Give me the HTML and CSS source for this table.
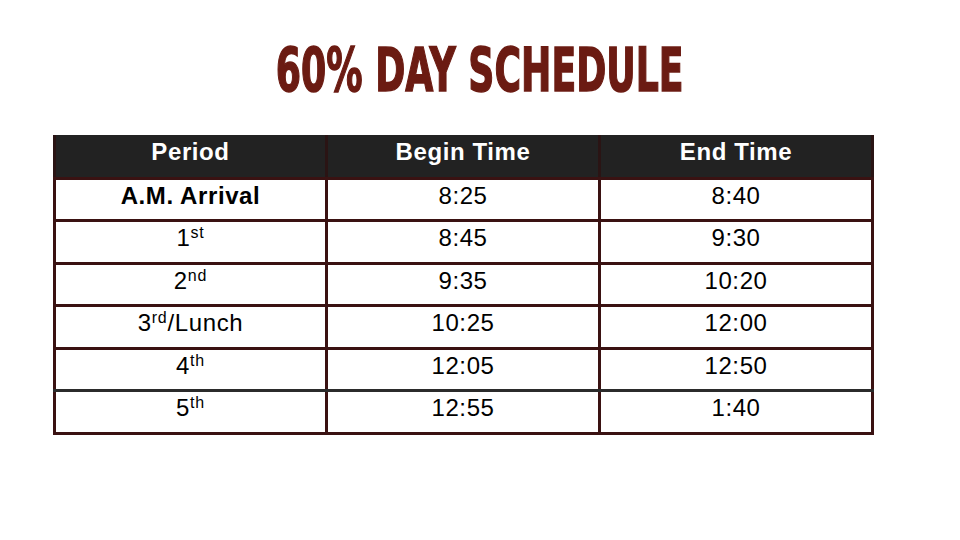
FILE: index.html
```html
<!DOCTYPE html>
<html>
<head>
<meta charset="utf-8">
<link rel="stylesheet" href="styles.css">
</head>
<body>
<div class="slide">
  <h1 class="title"><span class="title-text">60% DAY SCHEDULE</span></h1>
  <table class="schedule">
    <colgroup>
      <col class="c1"><col class="c2"><col class="c3">
    </colgroup>
    <thead>
      <tr class="head">
        <th>Period</th>
        <th>Begin Time</th>
        <th>End Time</th>
      </tr>
    </thead>
    <tbody>
      <tr>
        <td class="bold">A.M. Arrival</td>
        <td>8:25</td>
        <td>8:40</td>
      </tr>
      <tr>
        <td>1<sup>st</sup></td>
        <td>8:45</td>
        <td>9:30</td>
      </tr>
      <tr>
        <td>2<sup>nd</sup></td>
        <td>9:35</td>
        <td>10:20</td>
      </tr>
      <tr>
        <td>3<sup>rd</sup>/Lunch</td>
        <td>10:25</td>
        <td>12:00</td>
      </tr>
      <tr class="gray-bottom">
        <td>4<sup>th</sup></td>
        <td>12:05</td>
        <td>12:50</td>
      </tr>
      <tr>
        <td>5<sup>th</sup></td>
        <td>12:55</td>
        <td>1:40</td>
      </tr>
    </tbody>
  </table>
</div>
</body>
</html>
```

FILE: styles.css
```css
html, body {
  margin: 0;
  padding: 0;
  background: #ffffff;
}

.slide {
  width: 960px;
  height: 540px;
  overflow: hidden;
  background: #ffffff;
}

.title {
  margin: 0;
  padding-top: 41px;
  height: 62px;
  display: flex;
  justify-content: center;
  font-family: "DejaVu Sans", sans-serif;
  font-stretch: condensed;
  font-weight: bold;
  font-size: 62px;
  line-height: 60px;
  color: #6b1b12;
  white-space: nowrap;
}

.title-text {
  display: inline-block;
  transform: scaleX(0.65) scaleY(0.97);
  -webkit-text-stroke: 1.5px #6b1b12;
}

.schedule {
  margin-top: 32px;
  margin-left: 53px;
  width: 818px;
  border-collapse: collapse;
  table-layout: fixed;
  font-family: "Liberation Sans", Arial, sans-serif;
  font-size: 24px;
  letter-spacing: 0.6px;
  color: #000000;
}

.c1 { width: 272px; }
.c2 { width: 273px; }
.c3 { width: 273px; }

.schedule th,
.schedule td {
  border: 3px solid #3a1212;
  text-align: center;
  vertical-align: top;
  line-height: 28px;
  padding: 2px 4px 0;
  white-space: nowrap;
}

.head {
  height: 43px;
}

.schedule th {
  background: #222222;
  color: #ffffff;
  font-weight: bold;
  padding-top: 3px;
  border-top: none;
  border-left-color: #2a1414;
  border-right-color: #2a1414;
}

.schedule tbody tr {
  height: 42.5px;
}

.bold {
  font-weight: bold;
}

.gray-bottom td {
  border-bottom-color: #2b2b2b;
}

sup {
  font-size: 16px;
  line-height: 0;
  vertical-align: 8px;
  letter-spacing: 0.8px;
}
```
